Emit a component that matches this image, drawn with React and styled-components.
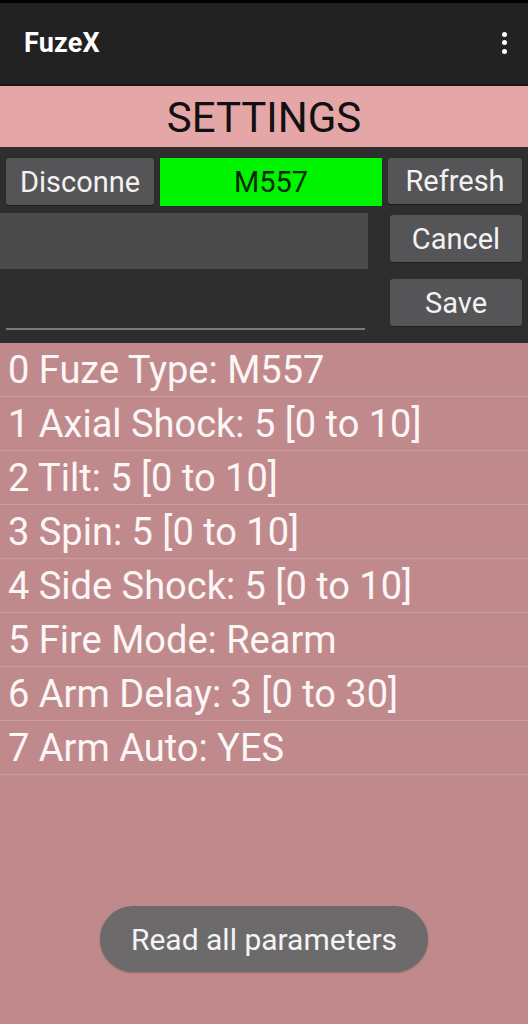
import React from "react";
import styled, { createGlobalStyle } from "styled-components";

const Global = createGlobalStyle`
  html, body { margin: 0; padding: 0; }
  body { font-family: Roboto, "Noto Sans", sans-serif; background: #c08a8c; }
  * { box-sizing: border-box; }
`;

const Screen = styled.div`
  width: 528px;
  height: 1024px;
  display: flex;
  flex-direction: column;
  background: #c08a8c;
  position: relative;
  overflow: hidden;
`;

const StatusStrip = styled.div`
  height: 3px;
  flex-shrink: 0;
  background: #000;
`;

const Toolbar = styled.div`
  height: 83px;
  flex-shrink: 0;
  background: #222222;
  display: flex;
  align-items: center;
  justify-content: space-between;
  padding: 0 24px 2px 24px;
  border-bottom: 2px solid #161616;
`;

const AppTitle = styled.div`
  color: #fff;
  font-size: 27px;
  font-weight: 700;
  letter-spacing: 0.2px;
`;

const Dots = styled.div`
  display: flex;
  flex-direction: column;
  gap: 3.5px;
  margin-right: -3px;
  span {
    width: 5px;
    height: 5px;
    border-radius: 50%;
    background: #fff;
  }
`;

const Banner = styled.div`
  height: 62px;
  flex-shrink: 0;
  background: #e4a6a6;
  display: flex;
  align-items: center;
  justify-content: center;
  font-size: 42px;
  color: #111;
  border-bottom: 1px solid #2e2e2e;
  padding-top: 2px;
`;

const Panel = styled.div`
  background: #2e2e2e;
  height: 195px;
  flex-shrink: 0;
  display: grid;
  grid-template-columns: 1fr 134px;
  column-gap: 17px;
  padding: 10px 6px 0 0;
`;

const LeftCol = styled.div`
  display: flex;
  flex-direction: column;
`;

const TopRow = styled.div`
  display: flex;
  gap: 6px;
  padding-left: 6px;
  height: 48px;
`;

const Btn = styled.div`
  background: #555557;
  color: #f2f2f2;
  font-size: 29px;
  border-radius: 3px;
  display: flex;
  align-items: center;
  justify-content: center;
  flex-shrink: 0;
  height: ${(p) => p.h || 47}px;
  width: ${(p) => (p.w ? p.w + "px" : "100%")};
  margin-top: ${(p) => p.mt || 0}px;
  box-shadow: 0 1px 1px rgba(0, 0, 0, 0.4);
`;

const Status = styled.div`
  flex: 1;
  background: #00f400;
  color: #0a2a0a;
  font-size: 29px;
  display: flex;
  align-items: center;
  justify-content: center;
  margin-right: -11px;
`;

const InputField = styled.div`
  margin-top: 7px;
  height: 56px;
  background: #4a4a4a;
  margin-right: 3px;
`;

const Underline = styled.div`
  margin: 59px 6px 0 6px;
  height: 2px;
  background: #7a7a7a;
`;

const RightCol = styled.div`
  display: flex;
  flex-direction: column;
  align-items: flex-end;
  gap: 11px;
`;

const List = styled.div`
  display: flex;
  flex-direction: column;
`;

const Row = styled.div`
  height: 54px;
  flex-shrink: 0;
  display: flex;
  align-items: center;
  padding-left: 8px;
  color: #fcf6f6;
  font-size: 38px;
  border-bottom: 1px solid #cc9d9e;
  padding-top: 1px;
  white-space: nowrap;
`;

const Toast = styled.div`
  position: absolute;
  left: 100px;
  top: 906px;
  width: 328px;
  height: 66px;
  border-radius: 33px;
  background: #6c6a6a;
  color: #f4f4f4;
  font-size: 30px;
  display: flex;
  align-items: center;
  justify-content: center;
  box-shadow: 0 1px 2px rgba(0, 0, 0, 0.25);
`;

const rows = [
  "0 Fuze Type: M557",
  "1 Axial Shock: 5 [0 to 10]",
  "2 Tilt: 5 [0 to 10]",
  "3 Spin: 5 [0 to 10]",
  "4 Side Shock: 5 [0 to 10]",
  "5 Fire Mode: Rearm",
  "6 Arm Delay: 3 [0 to 30]",
  "7 Arm Auto: YES",
];

export default function App() {
  return (
    <>
      <Global />
      <Screen>
        <StatusStrip />
        <Toolbar>
          <AppTitle>FuzeX</AppTitle>
          <Dots>
            <span />
            <span />
            <span />
          </Dots>
        </Toolbar>
        <Banner>SETTINGS</Banner>
        <Panel>
          <LeftCol>
            <TopRow>
              <Btn w={148}>Disconne</Btn>
              <Status>M557</Status>
            </TopRow>
            <InputField />
            <Underline />
          </LeftCol>
          <RightCol>
            <Btn h={46}>Refresh</Btn>
            <Btn h={47} w={132}>Cancel</Btn>
            <Btn h={47} w={132} mt={6}>Save</Btn>
          </RightCol>
        </Panel>
        <List>
          {rows.map((r) => (
            <Row key={r}>{r}</Row>
          ))}
        </List>
        <Toast>Read all parameters</Toast>
      </Screen>
    </>
  );
}
